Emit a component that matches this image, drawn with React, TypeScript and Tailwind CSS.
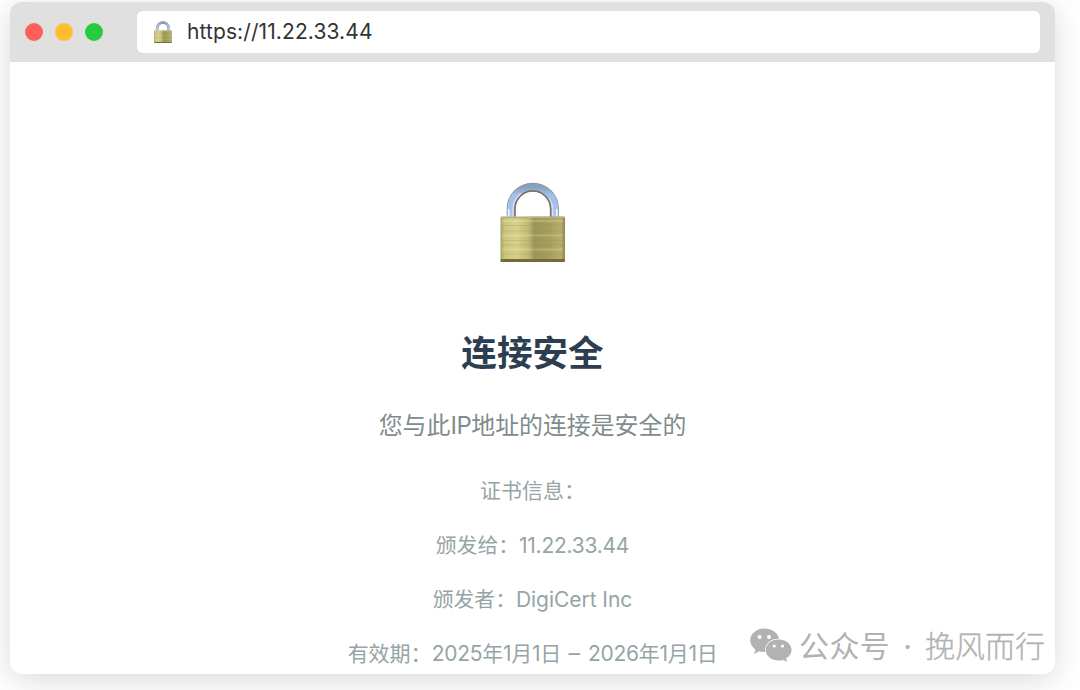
import React from 'react';

interface PadlockProps {
  id: string;
  className?: string;
}

function Padlock({ id, className }: PadlockProps) {
  return (
    <svg viewBox="0 0 66 80" className={className} aria-hidden="true">
      <defs>
        <linearGradient id={`${id}-body`} x1="0" x2="1" y1="0" y2="0">
          <stop offset="0" stopColor="#a8a15c" />
          <stop offset="0.06" stopColor="#cbc581" />
          <stop offset="0.25" stopColor="#d6d08c" />
          <stop offset="0.44" stopColor="#bfb873" />
          <stop offset="0.52" stopColor="#9c955a" />
          <stop offset="0.75" stopColor="#a59e60" />
          <stop offset="0.94" stopColor="#b5ae6c" />
          <stop offset="1" stopColor="#8d864c" />
        </linearGradient>
        <linearGradient id={`${id}-shackle`} x1="0" x2="0" y1="0" y2="1">
          <stop offset="0" stopColor="#86a0c0" />
          <stop offset="0.25" stopColor="#a2c0ea" />
          <stop offset="1" stopColor="#a9c4ec" />
        </linearGradient>
      </defs>
      {/* shackle */}
      <path d="M11 36V26.800a21.800 21.800 0 0 1 43.600 0V36" fill="none" stroke="#8b8d94" strokeWidth="8.6" />
      <path d="M11 36V26.800a21.800 21.800 0 0 1 43.600 0V36" fill="none" stroke={`url(#${id}-shackle)`} strokeWidth="7.2" />
      <path d="M8.800 36V27M56.800 36V27" fill="none" stroke="#eaf2ff" strokeWidth="1.8" />
      <path d="M13 36V27a20 20 0 0 1 8-15.500M52.600 36V27a20 20 0 0 0-4-11" fill="none" stroke="#d6e5fb" strokeWidth="1.2" />
      <path d="M15 36V26.800a17.800 17.800 0 0 1 35.600 0V36" fill="none" stroke="#77705a" strokeWidth="1.5" />
      {/* body */}
      <rect x="0.5" y="34.5" width="64.5" height="45.5" rx="1.5" fill={`url(#${id}-body)`} />
      <path d="M1 35.500h63.500" stroke="#b5b07c" strokeWidth="1.6" />
      <path d="M2 43.500h61M2 49h61M2 58.500h61M2 63h61M2 72h61" stroke="#8e8640" strokeOpacity="0.25" strokeWidth="0.9" />
      <path d="M2 39h61M2 53.500h61M2 67.500h61" stroke="#fffbc0" strokeOpacity="0.22" strokeWidth="1.8" />
      <path d="M1 77h63.500l.5 1.500q0 1.500-1.500 1.500h-61.500q-1.500 0-1.500-1.500z" fill="#756b36" />
    </svg>
  );
}

function WechatIcon({ className }: { className?: string }) {
  return (
    <svg viewBox="0 0 42 34" className={className} fill="currentColor" aria-hidden="true">
      <path d="M14.700.5C6.600.5.200 5.800.200 12.300c0 3.700 2 6.900 5.300 9.100L4.200 26l5-2.700c1.700.5 3.600.8 5.500.8 8.100 0 14.500-5.300 14.500-11.800S22.800.5 14.700.5z" />
      <path
        d="M28.600 11.500c-7.200 0-13 4.700-13 10.500s5.800 10.500 13 10.500c1.500 0 3-.2 4.400-.6l4.100 2-1-3.600c3.400-1.900 5.500-4.900 5.500-8.300 0-5.800-5.800-10.500-13-10.500z"
        stroke="white"
        strokeWidth="1.4"
        paintOrder="stroke"
      />
      <g fill="white">
        <circle cx="9.600" cy="8.900" r="2" />
        <circle cx="19" cy="8.900" r="2" />
        <circle cx="24.200" cy="18" r="1.600" />
        <circle cx="32.500" cy="18" r="1.600" />
      </g>
    </svg>
  );
}

export default function App() {
  return (
    <div className="h-[690px] w-[1080px] overflow-hidden bg-white pl-[10px] pt-[2px] font-['Inter','Noto_Sans_CJK_SC',sans-serif]">
      <div className="relative h-[672px] w-[1045px] overflow-hidden rounded-xl bg-white shadow-[0_6px_30px_rgba(0,0,0,0.15)]">
        {/* Browser bar */}
        <div className="flex h-[60px] items-center bg-[#e0e0e0] pl-[14.6px] pr-[15px]">
          <div className="flex gap-3">
            <span className="size-[18px] rounded-full bg-[#ff5f57]" />
            <span className="size-[18px] rounded-full bg-[#ffbd2e]" />
            <span className="size-[18px] rounded-full bg-[#28ca42]" />
          </div>
          <div className="ml-[34.4px] flex h-[42px] flex-1 items-center rounded-md bg-white pl-[17.5px]">
            <Padlock id="small" className="h-[22px] w-[18px]" />
            <span className="ml-[14.5px] pb-[2px] text-[21px] leading-none tracking-[0.1px] text-[#333333]">https://11.22.33.44</span>
          </div>
        </div>

        {/* Page */}
        <div className="flex flex-col items-center pt-[120px] text-center">
          <Padlock id="large" className="h-20 w-[66px]" />
          <h1 className="mt-[65px] text-[35.6px] leading-[54px] font-bold text-[#2c3e50]">连接安全</h1>
          <p className="mt-[27px] text-[23.9px] leading-9 text-[#7f8c8d]">
            您与此<span className="tracking-[-0.4px]">IP</span>地址的连接是安全的
          </p>
          <div className="mt-[20px] text-[21px] leading-[54px] text-[#95a5a6]">
            <p className="mb-px">证书信息：</p>
            <p>
              <span className="text-[20.8px]">颁发给：</span>
              <span className="tracking-[-0.25px]">11.22.33.44</span>
            </p>
            <p>
              <span className="text-[20.8px]">颁发者：</span>
              <span className="tracking-[-0.05px]">DigiCert Inc</span>
            </p>
            <p>
              有效期：<span className="tracking-[-0.25px]">2025年1月1日</span>
              <span className="inline-block w-[27px] text-center">
                <span className="inline-block scale-x-110">–</span>
              </span>
              <span className="tracking-[-0.3px]">2026年1月1日</span>
            </p>
          </div>
        </div>

        <div className="absolute right-[10px] bottom-[6px] flex items-center text-[30px] leading-[44px] text-[#b2b2b2]">
          <WechatIcon className="mr-[7px] mb-[3px] h-[34px] w-[42px]" />
          <span className="tracking-[0.3px]">公众号</span>
          <span className="w-[35px] text-center">·</span>
          <span className="font-light [-webkit-text-stroke:0.35px_#b2b2b2]">挽风而行</span>
        </div>
      </div>
    </div>
  );
}
